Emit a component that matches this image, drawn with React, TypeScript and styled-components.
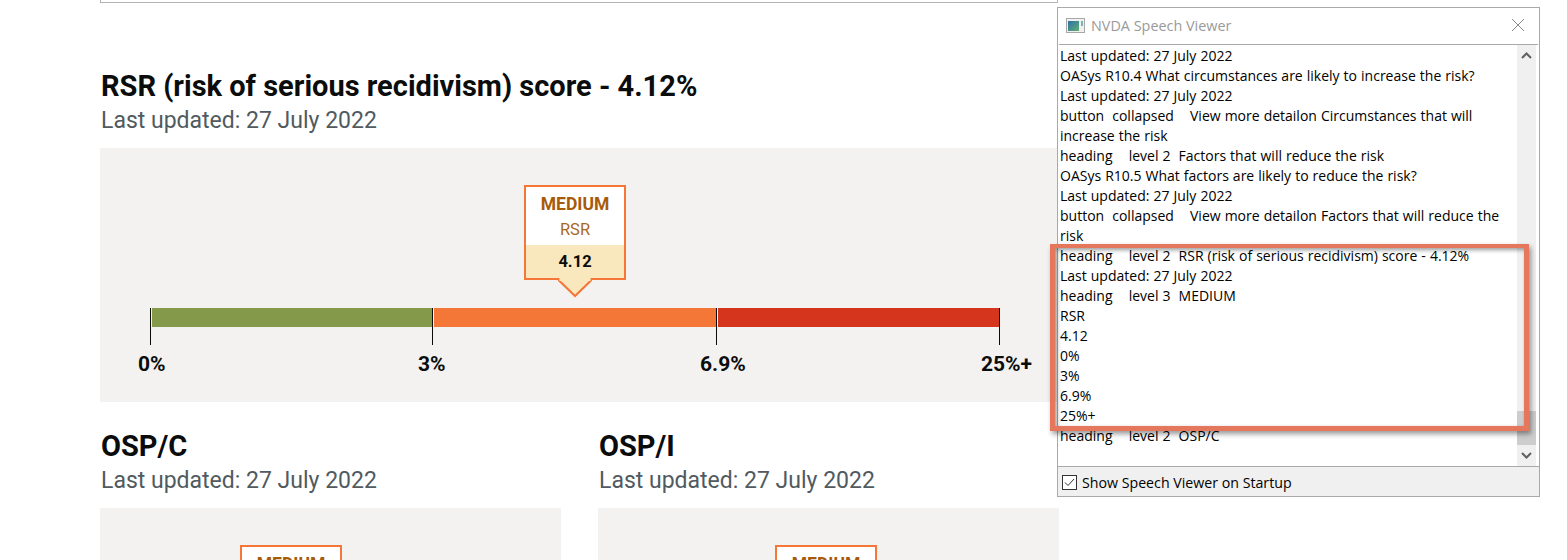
import React from 'react';
import styled, { createGlobalStyle } from 'styled-components';

const GlobalStyle = createGlobalStyle`
  html, body {
    margin: 0;
    padding: 0;
    height: 560px;
    overflow: hidden;
    background: #fff;
  }
`;

const Page = styled.div`
  position: relative;
  width: 1567px;
  height: 560px;
  overflow: hidden;
  font-family: "Roboto", "Liberation Sans", sans-serif;
`;

const Main = styled.main`
  width: 958px;
  margin-left: 100px;
`;

const TopBox = styled.div`
  height: 3px;
  border: 1px solid #b1b4b6;
  border-top: 0;
  box-sizing: border-box;
  margin-bottom: 65px;
`;

const Heading = styled.h2`
  margin: 0;
  padding-left: 1px;
  font-size: 29px;
  line-height: 36px;
  font-weight: 700;
  color: #0b0c0c;
`;

const Updated = styled.p`
  margin: 0 0 11px;
  padding: 1px 0 0 1px;
  font-size: 23px;
  line-height: 32px;
  font-weight: 400;
  color: #505a5f;
`;

const Panel = styled.section<{ $small?: boolean }>`
  background: #f3f2f1;
  height: ${(p) => (p.$small ? '120px' : '254px')};
  padding-top: 37px;
  box-sizing: border-box;
`;

const Callout = styled.div<{ $offset: number }>`
  position: relative;
  width: 102px;
  box-sizing: border-box;
  margin-left: ${(p) => p.$offset}px;
  border: 2px solid #f47738;
  background: #fff;
  text-align: center;
`;

const CalloutLevel = styled.h3`
  margin: 0;
  padding-top: 6px;
  font-size: 17.5px;
  line-height: 22px;
  font-weight: 700;
  color: #a85a0b;
`;

const CalloutName = styled.div`
  font-size: 16.5px;
  line-height: 22px;
  padding: 4px 0;
  color: #a86a1f;
`;

const CalloutValue = styled.div`
  background: #f9e7bd;
  font-size: 16.5px;
  font-weight: 700;
  line-height: 33px;
  color: #0b0c0c;
`;

const CalloutTip = styled.svg`
  position: absolute;
  left: 32px;
  top: 91px;
`;

const Scale = styled.div`
  display: flex;
  margin: 28px 0 0 50px;
`;

const Segment = styled.div<{ $width: number; $last?: boolean }>`
  width: ${(p) => p.$width}px;
  height: 37px;
  box-sizing: border-box;
  border-left: 1px solid #0b0c0c;
  border-right: ${(p) => (p.$last ? '1px solid #0b0c0c' : '0')};
`;

const Fill = styled.div<{ $color: string }>`
  height: 19px;
  margin-left: 1px;
  background: ${(p) => p.$color};
`;

const Labels = styled.div`
  display: flex;
  margin: 9px 0 0 38px;
`;

const Label = styled.div<{ $width: number }>`
  width: ${(p) => p.$width}px;
  font-size: 21px;
  line-height: 20px;
  font-weight: 700;
  color: #0b0c0c;
`;

const Columns = styled.div`
  display: flex;
  gap: 37px;
  width: 959px;
  margin-top: 26px;
`;

const Column = styled.div`
  width: 461px;
  flex: none;
`;

const Viewer = styled.aside`
  position: absolute;
  left: 1057px;
  top: 7px;
  width: 483px;
  height: 490px;
  box-sizing: border-box;
  border: 1px solid #a9a9a9;
  background: #fff;
  display: flex;
  flex-direction: column;
  font-family: "Open Sans", "Noto Sans", sans-serif;
`;

const TitleBar = styled.div`
  height: 36px;
  box-sizing: border-box;
  flex: none;
  display: flex;
  align-items: center;
  gap: 6px;
  padding: 0 14px 2px 8px;
`;

const Title = styled.span`
  flex: 1;
  font-size: 14.4px;
  color: #9a9a9a;
`;

const ViewerBody = styled.div`
  flex: 1;
  min-height: 0;
  display: flex;
  margin: 0 1px;
  border-top: 1px solid #a9a9a9;
  box-sizing: border-box;
`;

const Log = styled.div`
  flex: 1;
  min-width: 0;
  padding: 1px 0 0 1px;
  overflow: hidden;
  font-size: 14px;
  line-height: 20px;
  word-spacing: 0.4px;
  color: #000;
  white-space: pre-wrap;
`;

const Scrollbar = styled.div`
  width: 19px;
  margin-right: 2px;
  flex: none;
  display: flex;
  flex-direction: column;
  background: #f0f0f0;
`;

const ScrollArrow = styled.svg`
  flex: none;
  display: block;
`;

const Track = styled.div`
  flex: 1;
  display: flex;
  flex-direction: column;
  justify-content: flex-end;
  padding-bottom: 1px;
`;

const Thumb = styled.div`
  height: 34px;
  background: #cdcdcd;
`;

const Footer = styled.div`
  height: 30px;
  box-sizing: border-box;
  flex: none;
  display: flex;
  align-items: center;
  gap: 5px;
  padding: 2px 0 0 4px;
  border-top: 1px solid #a9a9a9;
  background: #f0f0f0;
  font-size: 14.2px;
  color: #000;
`;

const Check = styled.svg`
  flex: none;
  display: block;
`;

const Highlight = styled.div`
  position: absolute;
  left: 1050px;
  top: 244px;
  width: 479px;
  height: 187px;
  box-sizing: border-box;
  border: 5px solid #e4775c;
  border-top-width: 4px;
  box-shadow: 2px 3px 5px rgba(0, 0, 0, 0.4), inset 2px 2px 4px rgba(0, 0, 0, 0.4);
`;

const logLines = [
  'Last updated: 27 July 2022',
  'OASys R10.4 What circumstances are likely to increase the risk?',
  'Last updated: 27 July 2022',
  'button  collapsed    View more detailon Circumstances that will increase the risk',
  'heading    level 2  Factors that will reduce the risk',
  'OASys R10.5 What factors are likely to reduce the risk?',
  'Last updated: 27 July 2022',
  'button  collapsed    View more detailon Factors that will reduce the risk',
  'heading    level 2  RSR (risk of serious recidivism) score - 4.12%',
  'Last updated: 27 July 2022',
  'heading    level 3  MEDIUM',
  'RSR',
  '4.12',
  '0%',
  '3%',
  '6.9%',
  '25%+',
  'heading    level 2  OSP/C',
];

const RiskCallout = ({ offset, name, value }: { offset: number; name: string; value: string }) => (
  <Callout $offset={offset}>
    <CalloutLevel>MEDIUM</CalloutLevel>
    <CalloutName>{name}</CalloutName>
    <CalloutValue>{value}</CalloutValue>
    <CalloutTip width="34" height="21" viewBox="0 0 34 21">
      <path d="M0 1.5 L17 18 L34 1.5" fill="#f9e7bd" stroke="#f47738" strokeWidth="2" />
      <rect x="1.5" y="0" width="31" height="3" fill="#f9e7bd" />
    </CalloutTip>
  </Callout>
);

export default function App() {
  return (
    <Page>
      <GlobalStyle />
      <Main>
        <TopBox />
        <Heading>RSR (risk of serious recidivism) score - 4.12%</Heading>
        <Updated>Last updated: 27 July 2022</Updated>
        <Panel>
          <RiskCallout offset={424} name="RSR" value="4.12" />
          <Scale>
            <Segment $width={282}><Fill $color="#85994b" /></Segment>
            <Segment $width={284}><Fill $color="#f47738" /></Segment>
            <Segment $width={284} $last><Fill $color="#d4351c" /></Segment>
          </Scale>
          <Labels>
            <Label $width={280}>0%</Label>
            <Label $width={282}>3%</Label>
            <Label $width={281}>6.9%</Label>
            <Label $width={60}>25%+</Label>
          </Labels>
        </Panel>
        <Columns>
          <Column>
            <Heading>OSP/C</Heading>
            <Updated>Last updated: 27 July 2022</Updated>
            <Panel $small>
              <RiskCallout offset={140} name="OSP/C" value="4.12" />
            </Panel>
          </Column>
          <Column>
            <Heading>OSP/I</Heading>
            <Updated>Last updated: 27 July 2022</Updated>
            <Panel $small>
              <RiskCallout offset={177} name="OSP/I" value="4.12" />
            </Panel>
          </Column>
        </Columns>
      </Main>
      <Viewer>
        <TitleBar>
          <svg width="19" height="15" viewBox="0 0 19 15">
            <defs>
              <linearGradient id="nvdaIcon" x1="0" y1="0" x2="1" y2="1">
                <stop offset="0" stopColor="#2f6fa8" />
                <stop offset="1" stopColor="#5fb070" />
              </linearGradient>
            </defs>
            <rect x="0.5" y="0.5" width="18" height="14" fill="#f0f0f0" stroke="#a8a8a8" />
            <rect x="2" y="3" width="11" height="10" fill="url(#nvdaIcon)" />
            <rect x="15" y="3" width="2" height="5" fill="#7fb0b0" />
          </svg>
          <Title>NVDA Speech Viewer</Title>
          <svg width="14" height="14" viewBox="0 0 14 14">
            <path d="M1 1 L13 13 M13 1 L1 13" stroke="#8a8a8a" strokeWidth="1" fill="none" />
          </svg>
        </TitleBar>
        <ViewerBody>
          <Log>
            {logLines.map((line, i) => (
              <div key={i}>{line}</div>
            ))}
          </Log>
          <Scrollbar>
            <ScrollArrow width="19" height="20" viewBox="0 0 19 20">
              <path d="M5 13 L9.5 8.5 L14 13" stroke="#606060" strokeWidth="2" fill="none" />
            </ScrollArrow>
            <Track>
              <Thumb />
            </Track>
            <ScrollArrow width="19" height="20" viewBox="0 0 19 20">
              <path d="M5 7 L9.5 11.5 L14 7" stroke="#606060" strokeWidth="2" fill="none" />
            </ScrollArrow>
          </Scrollbar>
        </ViewerBody>
        <Footer>
          <Check width="15" height="15" viewBox="0 0 15 15">
            <rect x="0.5" y="0.5" width="14" height="14" fill="#fff" stroke="#333" />
            <path d="M3 7.5 L6 10.5 L12 4" stroke="#333" strokeWidth="1" fill="none" />
          </Check>
          Show Speech Viewer on Startup
        </Footer>
      </Viewer>
      <Highlight />
    </Page>
  );
}
